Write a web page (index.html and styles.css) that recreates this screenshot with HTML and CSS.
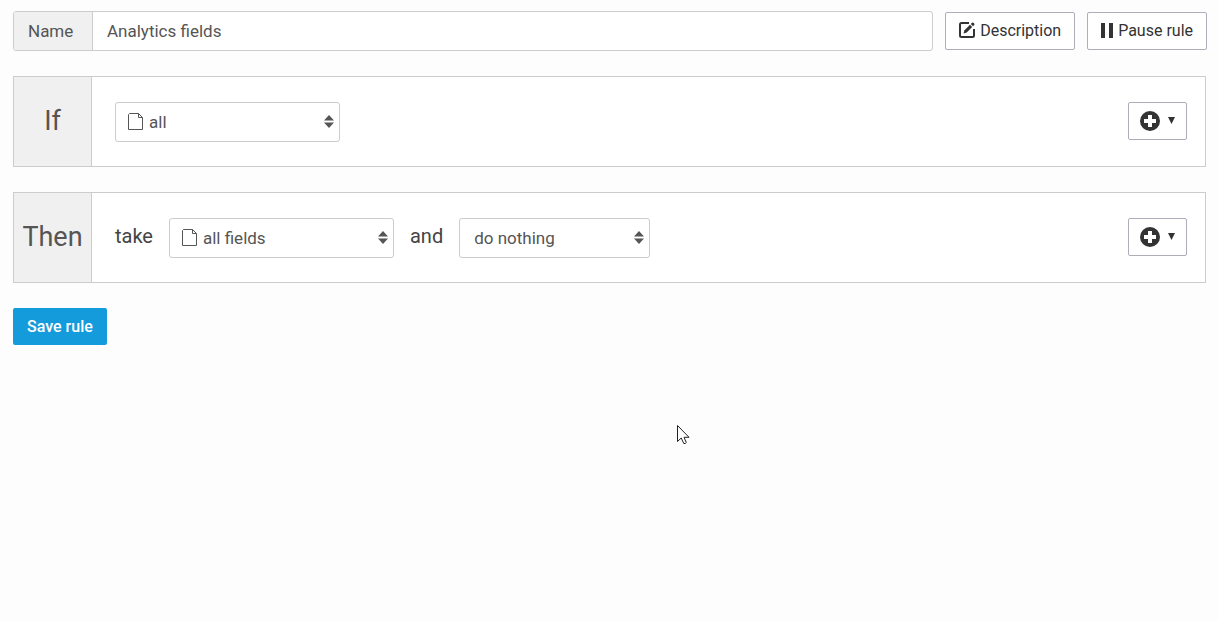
FILE: index.html
```html
<!DOCTYPE html>
<html lang="en">
<head>
    <meta charset="UTF-8">
    <meta name="viewport" content="width=device-width, initial-scale=1.0">
    <title>Analytics fields</title>
    <link rel="stylesheet" href="styles.css">
</head>
<body>
    <form class="rule-form">
        <div class="top-bar">
            <div class="name-group">
                <label class="name-label" for="rule-name">Name</label>
                <input class="name-input" type="text" id="rule-name" name="name" value="Analytics fields">
            </div>
            <button type="button" class="btn">
                <svg width="16" height="16" viewBox="0 0 16 16" aria-hidden="true">
                    <path d="M10 1H2.500Q1 1 1 2.500V13.500Q1 15 2.500 15H13.500Q15 15 15 13.500V7" fill="none" stroke="currentColor" stroke-width="2"/>
                    <path d="M4.500 11.500L5.500 8.300L11 2.800L13.200 5L7.700 10.500Z" fill="currentColor"/>
                    <path d="M11.800 2L13 .8Q13.700 .2 14.400 .8L15.200 1.600Q15.800 2.300 15.200 3L14 4.200Z" fill="currentColor"/>
                </svg>
                Description
            </button>
            <button type="button" class="btn">
                <svg width="12" height="15" viewBox="0 0 12 15" aria-hidden="true">
                    <path d="M0 0H4V15H0ZM8 0H12V15H8Z" fill="currentColor"/>
                </svg>
                Pause rule
            </button>
        </div>

        <section class="panel">
            <h2 class="panel-title">If</h2>
            <div class="panel-body">
                <div class="select-box">
                    <svg class="file-icon" width="16" height="18" viewBox="0 0 16 18" aria-hidden="true">
                        <path d="M1.500 .5H10.500L14.500 4.500V16.500H.5V1.500ZM10.500 .5V4.500H14.500" fill="none" stroke="currentColor"/>
                    </svg>
                    <select class="select with-icon" aria-label="Condition">
                        <option>all</option>
                        <option>all fields</option>
                    </select>
                    <svg class="arrows" width="10" height="13" viewBox="0 0 10 13" aria-hidden="true">
                        <path d="M5 0L10 5.500H0ZM0 7.500H10L5 13Z" fill="currentColor"/>
                    </svg>
                </div>
            </div>
            <button type="button" class="btn btn-add" aria-label="Add condition">
                <svg width="20" height="20" viewBox="0 0 20 20" aria-hidden="true">
                    <circle cx="10" cy="10" r="10" fill="currentColor"/>
                    <path d="M10 4V16M4 10H16" stroke="#fff" stroke-width="4"/>
                </svg>
                <svg width="7" height="7" viewBox="0 0 7 7" aria-hidden="true">
                    <path d="M0 0H7L3.500 7Z" fill="currentColor"/>
                </svg>
            </button>
        </section>

        <section class="panel">
            <h2 class="panel-title">Then</h2>
            <div class="panel-body">
                <label class="word" for="target">take</label>
                <div class="select-box">
                    <svg class="file-icon" width="16" height="18" viewBox="0 0 16 18" aria-hidden="true">
                        <path d="M1.500 .5H10.500L14.500 4.500V16.500H.5V1.500ZM10.500 .5V4.500H14.500" fill="none" stroke="currentColor"/>
                    </svg>
                    <select class="select with-icon" id="target">
                        <option>all fields</option>
                    </select>
                    <svg class="arrows" width="10" height="13" viewBox="0 0 10 13" aria-hidden="true">
                        <path d="M5 0L10 5.500H0ZM0 7.500H10L5 13Z" fill="currentColor"/>
                    </svg>
                </div>
                <label class="word" for="action">and</label>
                <div class="select-box select-box-small">
                    <select class="select" id="action">
                        <option>do nothing</option>
                    </select>
                    <svg class="arrows" width="10" height="13" viewBox="0 0 10 13" aria-hidden="true">
                        <path d="M5 0L10 5.500H0ZM0 7.500H10L5 13Z" fill="currentColor"/>
                    </svg>
                </div>
            </div>
            <button type="button" class="btn btn-add" aria-label="Add action">
                <svg width="20" height="20" viewBox="0 0 20 20" aria-hidden="true">
                    <circle cx="10" cy="10" r="10" fill="currentColor"/>
                    <path d="M10 4V16M4 10H16" stroke="#fff" stroke-width="4"/>
                </svg>
                <svg width="7" height="7" viewBox="0 0 7 7" aria-hidden="true">
                    <path d="M0 0H7L3.500 7Z" fill="currentColor"/>
                </svg>
            </button>
        </section>

        <button type="submit" class="btn-save">Save rule</button>
    </form>

    <svg class="cursor" width="13" height="20" viewBox="0 0 13 20" aria-hidden="true">
        <path d="M.5 .5V16.500L4.200 13L6.800 18.500Q8.500 19 9.300 17.500L7 12.300H12Z" fill="#fff" stroke="#222"/>
    </svg>
</body>
</html>
```
FILE: styles.css
```css
* {
    box-sizing: border-box;
}

body {
    margin: 0;
    background: #fdfdfd;
    color: #555;
    font-family: Roboto, Arial, sans-serif;
    font-size: 17px;
}

button,
input,
select {
    font: inherit;
    color: inherit;
}

.rule-form {
    padding: 11px 12px 0 13px;
}

.top-bar {
    display: flex;
    align-items: center;
    gap: 12px;
    margin-right: -1px;
    margin-bottom: 25px;
}

.name-group {
    display: flex;
    flex: 1;
    height: 40px;
    border: 1px solid #ccc;
    border-radius: 3px;
    background: #fff;
    overflow: hidden;
}

.name-label {
    width: 79px;
    padding-left: 14px;
    border-right: 1px solid #ccc;
    background: #f0f0f0;
    line-height: 38px;
}

.name-input {
    flex: 1;
    min-width: 0;
    padding: 0 14px;
    border: 0;
    background: none;
}

.btn {
    display: flex;
    align-items: center;
    gap: 5px;
    height: 38px;
    padding: 0 13px 2px;
    border: 1px solid #aeaeba;
    border-radius: 2px;
    background: #fff;
    color: #333;
    font-size: 16px;
    cursor: pointer;
}

.panel {
    display: flex;
    align-items: center;
    min-height: 91px;
    margin-bottom: 25px;
    padding-right: 18px;
    border: 1px solid #ccc;
    background: #fff;
}

.panel-title {
    display: flex;
    align-items: center;
    justify-content: center;
    align-self: stretch;
    width: 78px;
    margin: 0;
    padding-bottom: 2px;
    border-right: 1px solid #ccc;
    background: #f0f0f0;
    font-size: 27px;
    font-weight: 400;
}

.panel-body {
    display: flex;
    flex: 1;
    align-items: center;
    gap: 16px;
    padding-left: 23px;
}

.word {
    padding-bottom: 3px;
    color: #444;
    font-size: 20px;
}

.select-box {
    position: relative;
    width: 225px;
}

.select-box-small {
    width: 191px;
}

.select {
    appearance: none;
    width: 100%;
    height: 40px;
    padding: 0 30px 0 14px;
    border: 1px solid #ccc;
    border-radius: 3px;
    background: #fff;
}

.with-icon {
    padding-left: 33px;
}

.file-icon,
.arrows {
    position: absolute;
    top: 0;
    bottom: 0;
    margin: auto 0;
    pointer-events: none;
}

.file-icon {
    left: 13px;
}

.arrows {
    right: 6px;
}

.btn-add {
    gap: 8px;
    margin-bottom: 2px;
    padding: 0 11px;
}

.btn-save {
    height: 37px;
    padding: 0 14px;
    border: 0;
    border-radius: 2px;
    background: #149bdb;
    color: #fff;
    font-size: 16px;
    font-weight: 500;
    cursor: pointer;
}

.cursor {
    position: absolute;
    left: 677px;
    top: 425px;
    pointer-events: none;
}
```
